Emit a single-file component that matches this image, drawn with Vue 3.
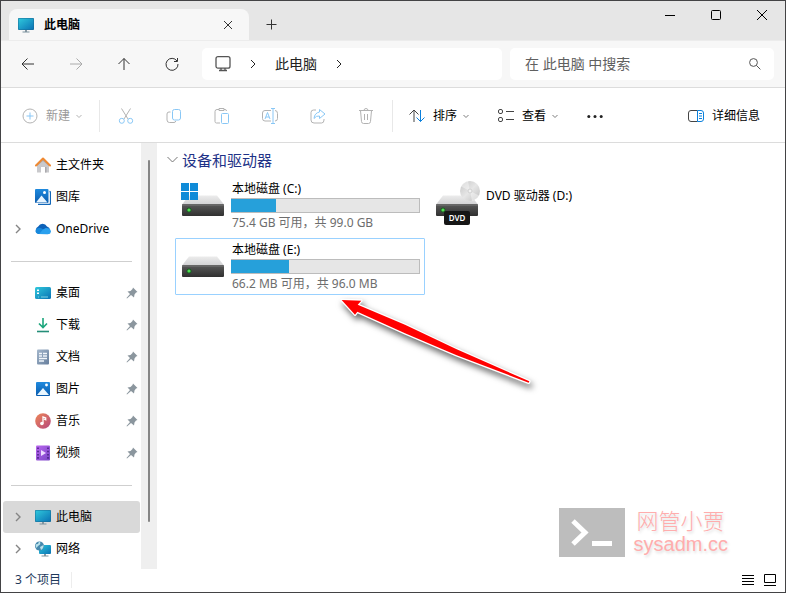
<script setup>
import { ref } from 'vue'

const query = ref('')

const groups = [
  [
    { name: '主文件夹', icon: 'home' },
    { name: '图库', icon: 'gallery' },
    { name: 'OneDrive', icon: 'cloud', expandable: true },
  ],
  [
    { name: '桌面', icon: 'desktop', pinned: true },
    { name: '下载', icon: 'download', pinned: true },
    { name: '文档', icon: 'document', pinned: true },
    { name: '图片', icon: 'picture', pinned: true },
    { name: '音乐', icon: 'music', pinned: true },
    { name: '视频', icon: 'video', pinned: true },
  ],
  [
    { name: '此电脑', icon: 'pc', expandable: true, current: true },
    { name: '网络', icon: 'network', expandable: true },
  ],
]

const drives = [
  { name: '本地磁盘 (C:)', kind: 'system', used: 24, info: '75.4 GB 可用，共 99.0 GB' },
  { name: 'DVD 驱动器 (D:)', kind: 'dvd' },
  { name: '本地磁盘 (E:)', kind: 'disk', used: 31, info: '66.2 MB 可用，共 96.0 MB', selected: true },
]
</script>

<template>
  <div class="window">
    <svg class="defs" width="0" height="0" aria-hidden="true">
      <defs>
        <linearGradient id="g-screen" x1="0" y1="0" x2="1" y2="1">
          <stop offset="0" stop-color="#2fc8dc" /><stop offset="1" stop-color="#0a72b4" />
        </linearGradient>
        <linearGradient id="g-top" x1="0" y1="0" x2="0" y2="1">
          <stop offset="0" stop-color="#ececec" /><stop offset="1" stop-color="#d2d2d4" />
        </linearGradient>
        <linearGradient id="g-front" x1="0" y1="0" x2="0" y2="1">
          <stop offset="0" stop-color="#5a5a5a" /><stop offset="1" stop-color="#303030" />
        </linearGradient>
        <linearGradient id="g-blue" x1="0" y1="0" x2="0" y2="1">
          <stop offset="0" stop-color="#1f8ade" /><stop offset="1" stop-color="#0b5cae" />
        </linearGradient>
        <linearGradient id="g-music" x1="0" y1="0" x2="1" y2="1">
          <stop offset="0" stop-color="#ee8657" /><stop offset="1" stop-color="#b5487e" />
        </linearGradient>
        <linearGradient id="g-video" x1="0" y1="0" x2="1" y2="1">
          <stop offset="0" stop-color="#b966ee" /><stop offset="1" stop-color="#7a45c6" />
        </linearGradient>
        <linearGradient id="g-doc" x1="0" y1="0" x2="1" y2="1">
          <stop offset="0" stop-color="#a4b7cc" /><stop offset="1" stop-color="#667e9c" />
        </linearGradient>
        <linearGradient id="g-disc" x1="0" y1="0" x2="1" y2="1">
          <stop offset="0" stop-color="#c4c4c4" /><stop offset="0.5" stop-color="#e6e6e6" /><stop offset="1" stop-color="#bdbdbd" />
        </linearGradient>
        <symbol id="i-pc" viewBox="0 0 16 16">
          <rect x="0" y="1" width="16" height="12" rx="1" fill="#176a94" />
          <rect x="0.5" y="1.5" width="15" height="11" rx="0.5" fill="url(#g-screen)" />
          <path d="M7 13h2v2H7z" fill="#8796a0" /><path d="M4.500 14.500h7v1h-7z" fill="#78909c" />
        </symbol>
        <symbol id="i-home" viewBox="0 0 16 16">
          <path d="M2 7l6-5 6 5v8.500H10V10H6v5.500H2z" fill="#c9c9cc" />
          <path d="M10 10h1.500v5.500H10zM2 7l6-5 6 5v2L8 4 2 9z" fill="#aaa9ad" />
          <path d="M1 8.500l7-7 7 7" fill="none" stroke="#ef8932" stroke-width="2" stroke-linecap="round" stroke-linejoin="round" />
        </symbol>
        <symbol id="i-gallery" viewBox="0 0 16 16">
          <path d="M14.500 2.500q1 0 1 1V14q0 1.500-1.500 1.500H3" fill="none" stroke="#1267b8" stroke-width="1.300" />
          <rect x="0" y="0" width="13.500" height="14" rx="1" fill="url(#g-blue)" />
          <path d="M1 13.500l5.500-7 6 7z" fill="#e8f5ff" /><circle cx="9.500" cy="3.500" r="1.500" fill="#fff" />
        </symbol>
        <symbol id="i-cloud" viewBox="0 0 16 16">
          <path d="M4 13a4 4 0 0 1-.8-7.500A5 5 0 0 1 12 5.500a4 4 0 0 1 .8 7.500z" fill="#0d61b8" />
          <path d="M3 13a3 3 0 0 1-.6-5.800q2-1.200 4.300.2L15 12q-1 1.300-2.500 1.300z" fill="#1788dc" />
          <path d="M8 8.600l2.700-1.500Q15.500 7 16 10.500 15.500 13 13.500 13H4.200z" fill="#2aa0ee" />
        </symbol>
        <symbol id="i-desktop" viewBox="0 0 16 16">
          <rect x="0" y="2" width="16" height="12" rx="1.500" fill="url(#g-screen)" />
          <path d="M2 4.500h2v1.500H2zm0 3h2V9H2z" fill="#fff" /><path d="M3 12h1M6 12h7" stroke="#7fd3e4" />
        </symbol>
        <symbol id="i-download" viewBox="0 0 16 16">
          <path d="M8 1v9M4 6.500L8 10.500l4-4" fill="none" stroke="#1ca67c" stroke-width="1.600" />
          <path d="M2 14.500h12" stroke="#248e78" stroke-width="1.600" />
        </symbol>
        <symbol id="i-document" viewBox="0 0 16 16">
          <rect x="2" y="0.500" width="12" height="15" rx="1" fill="url(#g-doc)" />
          <path d="M4 4.500h3m1 0h4M4 7h3m1 0h4M4 9.500h8M4 12h5" stroke="#f1f6fb" stroke-width="1.300" />
        </symbol>
        <symbol id="i-picture" viewBox="0 0 16 16">
          <rect x="1" y="1" width="14" height="14" rx="1" fill="url(#g-blue)" />
          <path d="M2 14l6-7 6 7z" fill="#eaf7ff" /><circle cx="11.500" cy="4" r="1.400" fill="#fff" />
        </symbol>
        <symbol id="i-music" viewBox="0 0 16 16">
          <circle cx="8" cy="8" r="7.800" fill="url(#g-music)" />
          <path d="M8 10.500V4l2.700 1v1.700L9 6" fill="none" stroke="#fff" stroke-width="1.300" /><circle cx="6.900" cy="10.500" r="1.800" fill="#fff" />
        </symbol>
        <symbol id="i-video" viewBox="0 0 16 16">
          <rect x="1" y="0.500" width="14" height="15" rx="1" fill="url(#g-video)" />
          <path d="M6 5l5 3-5 3z" fill="#eedcff" />
          <path d="M3 2.500v12M13 2.500v12" stroke="#4a2384" stroke-width="1.600" stroke-dasharray="1.600 1.600" />
        </symbol>
        <symbol id="i-network" viewBox="0 0 16 16">
          <rect x="4" y="4" width="12" height="9" rx="1" fill="url(#g-screen)" />
          <path d="M9 13h2v2H9z" fill="#8796a0" /><path d="M6.500 14.500h7v1h-7z" fill="#78909c" />
          <circle cx="4.500" cy="5" r="4.500" fill="#4789ad" />
          <path d="M1 3q2 1 3-2.300Q6 1 5 3.500L3 5 1.500 7Q0 5 1 3zM5 6l3.500-2Q9 7 6 9z" fill="#b9e2ec" />
        </symbol>
      </defs>
    </svg>

    <header class="titlebar">
      <div class="tab">
        <svg class="i16"><use href="#i-pc" /></svg>
        <span class="tab-title">此电脑</span>
        <button class="tab-close" aria-label="关闭标签页">
          <svg width="10" height="10" viewBox="0 0 10 10"><path d="M1 1l8 8M9 1L1 9" /></svg>
        </button>
      </div>
      <button class="tab-add" aria-label="新标签页">
        <svg width="11" height="11" viewBox="0 0 11 11"><path d="M5.500 0.500v10M0.500 5.500h10" /></svg>
      </button>
      <div class="controls">
        <button aria-label="最小化"><svg width="10" height="10" viewBox="0 0 10 10"><path d="M0 5.500h10" /></svg></button>
        <button aria-label="最大化"><svg width="10" height="10" viewBox="0 0 10 10"><rect x="0.500" y="0.500" width="9" height="9" rx="1" /></svg></button>
        <button aria-label="关闭"><svg width="10" height="10" viewBox="0 0 10 10"><path d="M0 0l10 10M10 0L0 10" /></svg></button>
      </div>
    </header>

    <div class="navbar">
      <div class="nav-buttons">
        <button aria-label="后退"><svg class="i16" viewBox="0 0 16 16"><path d="M14 8H2.500M7.500 2.500L2 8l5.500 5.500" /></svg></button>
        <button aria-label="前进" disabled><svg class="i16" viewBox="0 0 16 16"><path d="M2 8h11.500M8.500 2.500L14 8l-5.500 5.500" /></svg></button>
        <button aria-label="向上"><svg class="i16" viewBox="0 0 16 16"><path d="M8 14V2.500M2.500 8L8 2.500 13.500 8" /></svg></button>
        <button aria-label="刷新"><svg class="i16" viewBox="0 0 16 16"><path d="M13 5A6 6 0 1 0 14 8M13.500 2v3.500H10" /></svg></button>
      </div>
      <nav class="address" aria-label="路径">
        <svg class="i16" viewBox="0 0 16 16"><rect x="1" y="0.700" width="14" height="11.500" rx="2" stroke-width="1.300" /><path d="M6 12v2M10 12v2M4 14.500h8" stroke-width="1.300" /></svg>
        <svg class="crumb" viewBox="0 0 8 10"><path d="M2 1l4 4-4 4" /></svg>
        <a href="#">此电脑</a>
        <svg class="crumb" viewBox="0 0 8 10"><path d="M2 1l4 4-4 4" /></svg>
      </nav>
      <label class="search">
        <input v-model="query" type="search" placeholder="在 此电脑 中搜索" aria-label="搜索" />
        <svg width="12" height="12" viewBox="0 0 12 12"><circle cx="4.500" cy="4.500" r="3.900" /><path d="M7.400 7.400l4 4" /></svg>
      </label>
    </div>

    <div class="toolbar">
      <button class="labelled dim">
        <svg class="i16" viewBox="0 0 16 16"><circle cx="8" cy="8" r="7" /><path class="b" d="M8 4.500v7M4.500 8h7" /></svg>
        <span>新建</span>
        <svg class="caret" viewBox="0 0 8 8"><path d="M1.500 3L4 5.500 6.500 3" /></svg>
      </button>
      <span class="rule"></span>
      <div class="tools">
        <button class="dim" aria-label="剪切"><svg class="i16" viewBox="0 0 16 16"><path d="M3.500 0.500l6.500 10.500M12.500 0.500L6 11" /><circle class="b" cx="3.800" cy="12.800" r="2.500" /><circle class="b" cx="12.200" cy="12.800" r="2.500" /></svg></button>
        <button class="dim" aria-label="复制"><svg class="i16" viewBox="0 0 16 16"><path d="M4.500 4H3Q1 4 1 6v6q0 2.500 2.500 2.500H8q1.500 0 1.800-1.500" /><rect class="b" x="6.500" y="1.500" width="8" height="10.500" rx="2" /></svg></button>
        <button class="dim" aria-label="粘贴"><svg class="i16" viewBox="0 0 16 16"><path d="M5 1.500H3Q1 1.500 1 3.500v10q0 1.500 1.500 1.500H6M10 1.500h1q1.500 0 1.500 1.500M5 0.500h5v2H5z" /><rect class="b" x="7.500" y="5.500" width="7" height="10" rx="1" /></svg></button>
        <button class="dim" aria-label="重命名"><svg class="i16" viewBox="0 0 16 16"><path d="M9 2.500H3Q0.500 2.500 0.500 5v5.500Q0.500 13 3 13h6M13 2.500q2.500 0 2.500 3v5q0 2.500-2.500 2.500" /><path class="b" d="M3 11l2.500-6.500L8 11M4 9h3M11 0.500v15M9 0.500h4M9 15.500h4" /></svg></button>
        <button class="dim" aria-label="共享"><svg class="i16" viewBox="0 0 16 16"><path d="M6 2H3.500Q1 2 1 4.500v7.500q0 3 3 3h7.500q2.500 0 2.500-3v-1" /><path class="b" d="M9.500 1.500l5.500 4.500-5.500 4.500V8Q6 7.500 4 10.500 4.500 5 9.500 4z" /></svg></button>
        <button class="dim" aria-label="删除"><svg class="i16" viewBox="0 0 16 16"><path d="M1 2.500h14M6 2.500q0-2 2-2t2 2M2.500 2.500l1 11q.2 2 2 2h5q1.800 0 2-2l1-11M6.500 6v6M9.500 6v6" /></svg></button>
      </div>
      <span class="rule"></span>
      <button class="labelled">
        <svg class="i16" viewBox="0 0 16 16"><path d="M5 14V2.500M0.500 6.500L5 2l4.500 4.500" /><path class="b" d="M11.500 2v11.500M7.500 9.500l4 4 4-4" /></svg>
        <span>排序</span>
        <svg class="caret" viewBox="0 0 8 8"><path d="M1.500 3L4 5.500 6.500 3" /></svg>
      </button>
      <button class="labelled">
        <svg class="i16" viewBox="0 0 16 16"><rect x="0.500" y="1.500" width="4" height="4" rx="1.500" /><rect x="0.500" y="9.500" width="4" height="4" rx="1.500" /><path d="M8 3.500h8M8 11.500h8" /></svg>
        <span>查看</span>
        <svg class="caret" viewBox="0 0 8 8"><path d="M1.500 3L4 5.500 6.500 3" /></svg>
      </button>
      <button class="labelled" aria-label="更多">
        <svg class="i16 dots" viewBox="0 0 16 16"><circle cx="1.800" cy="8.500" r="1.500" /><circle cx="8" cy="8.500" r="1.500" /><circle cx="14.200" cy="8.500" r="1.500" /></svg>
      </button>
      <button class="labelled details">
        <svg class="i16" viewBox="0 0 16 16"><path d="M9.500 2.500H3Q0.500 2.500 0.500 5v6q0 2.500 2.500 2.500h6.500" /><path class="b" d="M9.500 2.500H13q2.500 0 2.500 2.500v6q0 2.500-2.500 2.500H9.500zM11 5.500h3M11 8h3M11 10.500h3" /></svg>
        <span>详细信息</span>
      </button>
    </div>

    <div class="body">
      <nav class="sidebar" aria-label="导航窗格">
        <ul v-for="(group, i) in groups" :key="i">
          <li v-for="item in group" :key="item.name">
            <a href="#" :class="{ current: item.current }">
              <span class="expander"><svg v-if="item.expandable" width="6" height="10" viewBox="0 0 6 10"><path d="M1 1l4 4-4 4" /></svg></span>
              <svg class="i16"><use :href="'#i-' + item.icon" /></svg>
              <span class="label">{{ item.name }}</span>
              <svg v-if="item.pinned" class="pin" width="12" height="12" viewBox="0 0 12 12"><path d="M7 0.500L11.500 5 10 5.500 8.500 7.500 8 10.500 5 8 1 11.500 0.500 11 4 7 1.500 4.500 4.500 4 6.500 2z" /></svg>
            </a>
          </li>
        </ul>
      </nav>
      <div class="scroll" aria-hidden="true"><span class="thumb"></span></div>

      <main class="content">
        <h1>
          <svg width="11" height="8" viewBox="0 0 11 8"><path d="M0.500 1l5 5 5-5" /></svg>
          设备和驱动器
        </h1>
        <div class="drives">
          <article v-for="drive in drives" :key="drive.name" class="drive" :class="[drive.kind, { selected: drive.selected }]">
            <svg class="drive-icon" viewBox="0 0 55 55">
              <path d="M13 17.500h28l7 9H6z" fill="url(#g-top)" />
              <rect x="6" y="26" width="42" height="12" rx="1" fill="url(#g-front)" />
              <path d="M6 27h42" stroke="#777" />
              <circle cx="13" cy="32" r="2.500" fill="#1d5c24" /><circle cx="13" cy="32" r="1.600" fill="#4fe052" />
              <path v-if="drive.kind === 'system'" d="M5 5h8v8H5zM14 5h8v8h-8zM5 14h8v8H5zM14 14h8v8h-8z" fill="#0f8bd8" />
              <g v-if="drive.kind === 'dvd'">
                <circle cx="40" cy="13" r="10" fill="url(#g-disc)" />
                <path d="M40 13L31 8.500Q34 3 38 3zM40 13l9 4.500q-3 5-7 5.500z" fill="#fff" opacity="0.4" />
                <circle cx="40" cy="13" r="2" fill="#f2f2f2" stroke="#d0d0d0" />
                <rect x="14" y="33" width="26" height="14" rx="2" fill="#161616" />
                <text x="27" y="43" class="dvd-text">DVD</text>
              </g>
            </svg>
            <div class="drive-text">
              <h2>{{ drive.name }}</h2>
              <template v-if="drive.info">
                <div class="gauge" role="meter" aria-valuemin="0" aria-valuemax="100" :aria-valuenow="drive.used" :aria-label="drive.name">
                  <div class="fill" :style="{ width: drive.used + '%' }"></div>
                </div>
                <p>{{ drive.info }}</p>
              </template>
            </div>
          </article>
        </div>
      </main>
    </div>

    <footer class="status">
      <span class="count">3 个项目</span>
      <div class="view-modes">
        <button aria-label="详细信息视图"><svg width="12" height="12" viewBox="0 0 12 12"><path d="M0 1.500h12M0 4.500h12M0 7.500h12M0 10.500h12" /></svg></button>
        <button aria-label="大图标视图"><svg width="12" height="12" viewBox="0 0 12 12"><path d="M0.500 0.500h11v8H0.500zM0 11.500h12" /></svg></button>
      </div>
    </footer>

    <svg class="arrow" viewBox="0 0 660 330" aria-hidden="true">
      <path d="M35 30L94 32 83 44 225 104 380 178 598 274 596 278 380 196 225 130 82 65 75 74z" />
    </svg>

    <div class="watermark">
      <svg width="66" height="49" viewBox="0 0 66 49"><rect width="66" height="49" fill="#bdbdbd" /><path d="M14 13l12 11.500L14 36M33 35.500h20" fill="none" stroke="#fff" stroke-width="5" /></svg>
      <div class="watermark-text">
        <span class="brand">网管小贾</span>
        <span class="site">sysadm.cc</span>
      </div>
    </div>
  </div>
</template>

<style>
body {
  margin: 0;
  background: #fff;
}
</style>

<style scoped>
* {
  box-sizing: border-box;
}
.window {
  position: relative;
  display: flex;
  flex-direction: column;
  min-height: 100vh;
  border: 1px solid #434345;
  background: #fff;
  color: #000;
  font: 12px/16px 'Noto Sans', 'Noto Sans CJK SC', sans-serif;
}
.defs {
  position: absolute;
}
svg {
  display: block;
  flex: none;
  fill: none;
  stroke: none;
}
button {
  display: flex;
  align-items: center;
  justify-content: center;
  padding: 0;
  border: 0;
  background: none;
  color: inherit;
  font: inherit;
}
button svg,
.address svg,
.search svg {
  stroke: currentColor;
}
a {
  color: inherit;
  text-decoration: none;
}
.i16 {
  width: 16px;
  height: 16px;
}

.titlebar {
  display: flex;
  height: 39px;
  padding-left: 8px;
  background: #e6e6e6;
}
.tab {
  display: flex;
  align-items: center;
  width: 240px;
  margin-top: 8px;
  padding: 0 16px 0 9px;
  border-radius: 8px 8px 0 0;
  background: #f7f7f7;
}
.tab-title {
  margin-left: 10px;
  font-weight: 600;
}
.tab-close {
  margin-left: auto;
  color: #333;
}
.tab-add {
  width: 44px;
  margin-top: 8px;
  color: #333;
}
.controls {
  display: flex;
  margin-left: auto;
}
.controls button {
  width: 46px;
  height: 28px;
}

.navbar {
  display: flex;
  align-items: center;
  gap: 8px;
  height: 48px;
  padding: 0 11px 0 3px;
  border-top: 1px solid #ececec;
  border-bottom: 1px solid #dcdcdc;
  background: #f7f7f7;
  font-size: 14px;
}
.nav-buttons {
  display: flex;
  margin-right: -2px;
}
.nav-buttons button {
  width: 48px;
  height: 32px;
  color: #333;
}
.nav-buttons button:disabled {
  color: #aaa;
}
.address,
.search {
  display: flex;
  align-items: center;
  height: 32px;
  border-radius: 5px;
  background: #fff;
}
.address {
  flex: 274 1 0;
  gap: 18px;
  padding: 0 13px;
  color: #222;
}
.address svg {
  color: #555;
}
.address .crumb {
  width: 8px;
  height: 10px;
  color: #222;
}
.search {
  flex: 236 1 0;
  padding: 0 13px 0 15px;
  color: #555;
}
.search input {
  flex: 1;
  min-width: 0;
  padding: 0;
  border: 0;
  outline: 0;
  background: none;
  color: #333;
  font: inherit;
}
.search input::placeholder {
  color: #606060;
  opacity: 1;
}

.toolbar {
  display: flex;
  align-items: center;
  height: 55px;
  padding-top: 1px;
  border-bottom: 1px solid #dcdcdc;
}
.toolbar .b {
  stroke: #0a80dc;
}
.labelled {
  height: 32px;
  padding: 0 0 0 28px;
}
.labelled span {
  margin-left: 8px;
}
.labelled:first-child {
  padding: 0 16px 0 21px;
}
.rule + .labelled {
  padding-left: 16px;
}
.labelled svg {
  color: #444;
}
.caret {
  width: 8px;
  height: 8px;
  margin-left: 5px;
  opacity: 0.7;
}
.dim,
.labelled.dim svg {
  color: #999;
}
.dim svg {
  opacity: 0.75;
}
.toolbar .dim .b {
  stroke: #62b5f2;
}
.rule {
  width: 1px;
  height: 32px;
  background: #e8e8e8;
}
.tools {
  display: flex;
  padding: 0 2px;
}
.tools button {
  width: 48px;
  height: 32px;
}
.labelled .dots {
  fill: #222;
  stroke: none;
}
.details {
  margin-left: auto;
  padding-right: 25px;
}

.body {
  display: flex;
  flex: 1;
}
.sidebar {
  width: 140px;
  padding: 6px 1px 2px 2px;
}
.sidebar ul {
  margin: 0;
  padding: 0;
  list-style: none;
}
.sidebar ul + ul::before {
  content: '';
  display: block;
  height: 1px;
  margin: 16px 8px 15px;
  background: #cfcfcf;
}
.sidebar a {
  display: flex;
  align-items: center;
  height: 32px;
  padding: 0 2px 0 12px;
  border-radius: 3px;
}
.sidebar .current {
  background: #d9d9d9;
}
.expander {
  width: 20px;
}
.expander svg {
  stroke: #858585;
  stroke-width: 1.4px;
}
.label {
  flex: 1;
  margin-left: 5px;
}
.pin path {
  fill: #8b969e;
}
.scroll {
  display: flex;
  justify-content: center;
  width: 16px;
  padding: 17px 0 47px;
  background: #efefef;
}
.thumb {
  width: 2px;
  border-radius: 1px;
  background: #858585;
}

.content {
  flex: 1;
  padding: 2px 10px 0 18px;
}
h1,
h2,
p {
  margin: 0;
  font-weight: 400;
}
h1 {
  display: flex;
  align-items: center;
  gap: 4px;
  height: 32px;
  margin-left: -8px;
  padding-bottom: 2px;
  color: #1e3287;
  font-size: 15px;
}
h1 svg {
  stroke: #777;
}
.drives {
  display: grid;
  grid-template-columns: repeat(auto-fill, 250px);
  gap: 4px;
}
.drive {
  display: flex;
  height: 57px;
  padding-right: 4px;
  border: 1px solid transparent;
  border-radius: 1px;
}
.drive.selected {
  border-color: #99d1ff;
}
.drive-icon {
  width: 55px;
  height: 55px;
}
.drive-text {
  flex: 1;
}
.drive h2 {
  padding: 2px 0 0 1px;
  font-size: 12px;
  line-height: 18px;
}
.drive.dvd h2 {
  padding-top: 9px;
}
.gauge {
  height: 15px;
  border: 1px solid #bcbcbc;
  border-left: 0;
  background: #e6e6e6;
}
.fill {
  height: 100%;
  background: #26a0da;
}
.drive p {
  padding-left: 1px;
  color: #6d6d6d;
  line-height: 20px;
}
.dvd-text {
  fill: #fff;
  font: 600 8px 'Noto Sans', sans-serif;
  text-anchor: middle;
}

.status {
  display: flex;
  align-items: center;
  justify-content: space-between;
  height: 23px;
  padding: 0 9px 1px 14px;
}
.count {
  padding-right: 10px;
  border-right: 1px solid #ededed;
  color: #1e395b;
}
.view-modes {
  display: flex;
  gap: 10px;
}

.arrow {
  position: absolute;
  left: 329px;
  top: 289px;
  width: 220px;
  height: 110px;
  filter: drop-shadow(2px 4px 3px rgba(0, 0, 0, 0.6));
}
.arrow path {
  fill: #f00;
  stroke: #fff;
  stroke-width: 8;
  stroke-linejoin: round;
  paint-order: stroke;
}
.watermark {
  position: absolute;
  right: 57px;
  bottom: 35px;
  display: flex;
  gap: 9px;
}
.watermark-text {
  display: flex;
  flex-direction: column;
  color: #ffadad;
  text-shadow: 1px 2px 3px rgba(0, 0, 0, 0.15);
}
.brand {
  padding-left: 3px;
  font-size: 22px;
  font-weight: 300;
  line-height: 24px;
}
.site {
  font: 20px/24px 'Liberation Sans', sans-serif;
}
</style>
